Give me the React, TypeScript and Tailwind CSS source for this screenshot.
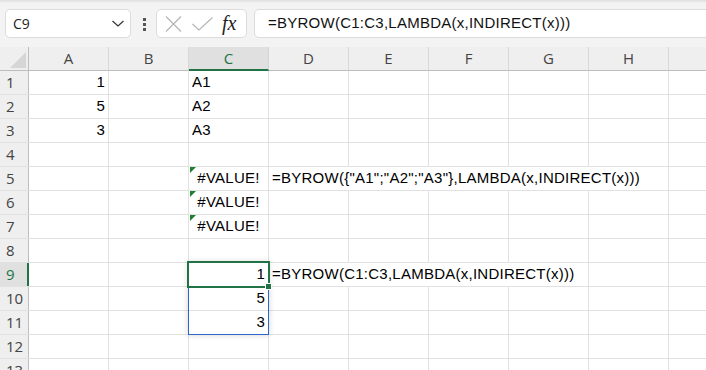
import clsx from 'clsx';

const COLS = ['A', 'B', 'C', 'D', 'E', 'F', 'G', 'H', ''];
const ROWS = 13;

type CellData = {
  text?: string;
  align?: 'left' | 'right' | 'center';
  error?: boolean;
  span?: number;
};

// row -> col index -> cell
const DATA: Record<number, Record<number, CellData>> = {
  1: { 0: { text: '1', align: 'right' }, 2: { text: 'A1' } },
  2: { 0: { text: '5', align: 'right' }, 2: { text: 'A2' } },
  3: { 0: { text: '3', align: 'right' }, 2: { text: 'A3' } },
  5: {
    2: { text: '#VALUE!', error: true, align: 'center' },
    3: { text: '=BYROW({"A1";"A2";"A3"},LAMBDA(x,INDIRECT(x)))', span: 5 },
  },
  6: { 2: { text: '#VALUE!', error: true, align: 'center' } },
  7: { 2: { text: '#VALUE!', error: true, align: 'center' } },
  9: {
    2: { text: '1', align: 'right' },
    3: { text: '=BYROW(C1:C3,LAMBDA(x,INDIRECT(x)))', span: 4 },
  },
  10: { 2: { text: '5', align: 'right' } },
  11: { 2: { text: '3', align: 'right' } },
};

const uiFont = "font-['Open_Sans','Noto_Sans',sans-serif]";
const cellFont = "font-['Liberation_Sans',Arial,sans-serif]";

function Toolbar() {
  return (
    <div className="h-[47px] bg-[#f3f3f3] flex flex-col">
      <div className="h-[3px] bg-gradient-to-b from-[#dedede] to-[#f3f3f3]" />
      <div className="flex items-start pt-[6px] pl-[5px]">
        {/* Name box */}
        <div className="shrink-0 w-[126px] h-[29px] bg-white border border-[#dcdcdc] rounded-[5px] flex items-center justify-between pl-[7px] pr-[6px]">
          <span className={clsx(uiFont, 'text-[14px] text-[#222]')}>C9</span>
          <svg width="12" height="7" viewBox="0 0 12 7" fill="none">
            <path d="M0.5 1 L6 6 L11.5 1" stroke="#333" strokeWidth="1.2" />
          </svg>
        </div>

        {/* Vertical dots */}
        <div className="shrink-0 ml-[12px] mt-[9px] flex flex-col gap-[2px]">
          <div className="w-[3px] h-[3px] bg-[#555]" />
          <div className="w-[3px] h-[3px] bg-[#555]" />
          <div className="w-[3px] h-[3px] bg-[#555]" />
        </div>

        {/* Cancel / enter / fx */}
        <div className="shrink-0 ml-[10px] w-[91px] h-[29px] bg-white border border-[#dcdcdc] rounded-[5px] flex items-center pl-[8px]">
          <svg width="17" height="16" viewBox="0 0 17 16" fill="none">
            <path d="M1 0.5 L16 15.5 M16 0.5 L1 15.5" stroke="#b4b4b4" strokeWidth="1.1" />
          </svg>
          <svg className="ml-[10px]" width="21" height="14" viewBox="0 0 21 14" fill="none">
            <path d="M0.5 7 L7 13 L20.5 0.5" stroke="#b4b4b4" strokeWidth="1.1" />
          </svg>
          <span className="ml-[9px] font-['Liberation_Serif',serif] italic text-[20px] leading-none text-[#222] -mt-[2px]">
            fx
          </span>
        </div>

        {/* Formula input */}
        <div className="shrink-0 ml-[7px] w-[480px] h-[29px] bg-white border border-[#dcdcdc] rounded-[5px] flex items-center pl-[13px]">
          <span className={clsx(cellFont, 'text-[15px] tracking-[0.25px] text-[#111] whitespace-nowrap')}>
            =BYROW(C1:C3,LAMBDA(x,INDIRECT(x)))
          </span>
        </div>
      </div>
    </div>
  );
}

function ColumnHeaders() {
  return (
    <div className="flex h-[24px] bg-[#efefef]">
      <div className="w-[29px] shrink-0 border-r border-b border-[#bdbdbd] flex items-end justify-end p-[2px]">
        <svg width="17" height="16" viewBox="0 0 17 16">
          <polygon points="17,0 17,16 1,16" fill="#d6d6d6" />
        </svg>
      </div>
      {COLS.map((c, i) => {
        const sel = c === 'C';
        return (
          <div
            key={i}
            className={clsx(
              'w-[80px] shrink-0 flex items-center justify-center text-[15px] border-r',
              uiFont,
              sel
                ? 'bg-[#e0e0e0] border-[#d4d4d4] border-b-2 border-b-[#217346] text-[#217346]'
                : 'border-[#d8d8d8] border-b border-b-[#bdbdbd] text-[#444]'
            )}
          >
            {c}
          </div>
        );
      })}
    </div>
  );
}

function Cell({ data, width }: { data?: CellData; width: number }) {
  const align = data?.align ?? 'left';
  return (
    <div
      className={clsx(
        'relative shrink-0 h-full border-r border-[#e1e1e1] flex items-center px-[3px] overflow-visible',
        align === 'right' && 'justify-end',
        align === 'center' && 'justify-center'
      )}
      style={{ width }}
    >
      {data?.error && (
        <div className="absolute left-[1px] top-0 w-0 h-0 border-t-[6px] border-t-[#1e7e34] border-r-[6px] border-r-transparent" />
      )}
      {data?.text && (
        <span className={clsx(cellFont, 'text-[15px] tracking-[0.25px] text-black whitespace-nowrap')}>
          {data.text}
        </span>
      )}
    </div>
  );
}

function Row({ n }: { n: number }) {
  const cells: JSX.Element[] = [];
  const rowData = DATA[n] ?? {};
  let i = 0;
  while (i < COLS.length) {
    const d = rowData[i];
    const span = d?.span ?? 1;
    cells.push(<Cell key={i} data={d} width={80 * span} />);
    i += span;
  }
  const sel = n === 9;
  return (
    <div className="flex h-[24px] border-b border-[#e1e1e1]">
      <div
        className={clsx(
          'w-[29px] shrink-0 flex items-center pl-[6px] text-[15px]',
          uiFont,
          sel
            ? 'bg-[#e0e0e0] border-r-2 border-[#217346] text-[#217346]'
            : 'bg-[#efefef] border-r border-[#bdbdbd] text-[#444]'
        )}
      >
        {n}
      </div>
      {cells}
    </div>
  );
}

export default function App() {
  return (
    <div className="w-[706px] h-[370px] overflow-hidden bg-white">
      <Toolbar />
      <ColumnHeaders />
      <div className="relative">
        {Array.from({ length: ROWS }, (_, k) => (
          <Row key={k} n={k + 1} />
        ))}

        {/* Spill range */}
        <div className="absolute left-[188px] top-[191px] w-[81px] h-[73px] border border-[#2b66c9] shadow-[0_0_6px_rgba(0,0,0,0.18)]" />
        {/* Active cell */}
        <div className="absolute left-[187px] top-[190px] w-[83px] h-[27px] border-2 border-[#217346]" />
        {/* Fill handle */}
        <div className="absolute left-[265px] top-[212px] w-[7px] h-[7px] bg-[#217346] border border-white" />
      </div>
    </div>
  );
}
